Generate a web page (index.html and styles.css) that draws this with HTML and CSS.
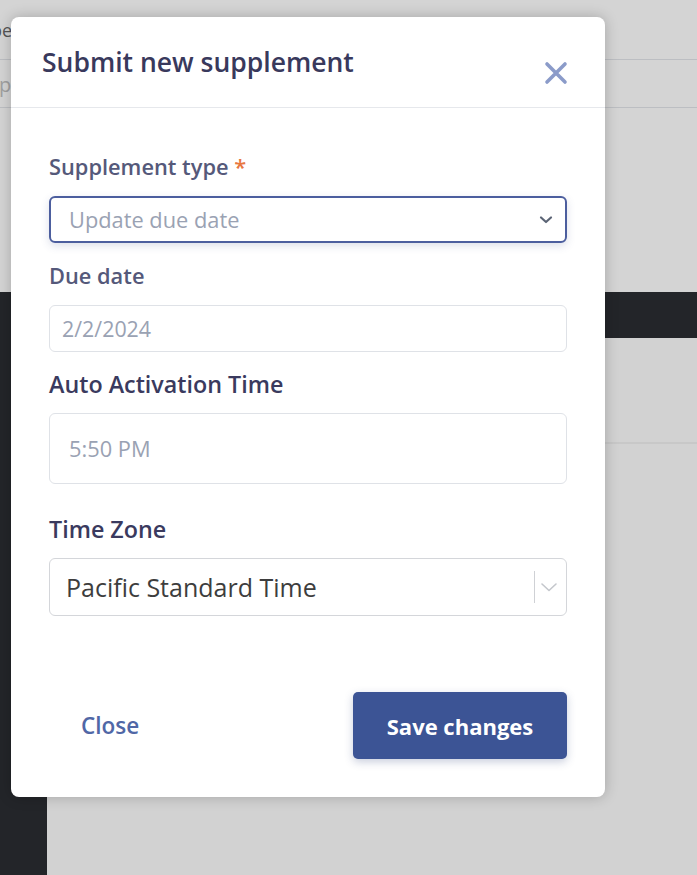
FILE: index.html
```html
<!DOCTYPE html>
<html>
<head>
<meta charset="utf-8">
<link rel="stylesheet" href="styles.css">
</head>
<body>
<div class="page">
  <div class="top">
    <div class="bg-label">Type</div>
    <div class="bg-input">Typ</div>
  </div>
  <div class="dark-bar"></div>
  <div class="lower">
    <div class="sidebar"></div>
    <div class="content">
      <div class="content-row"></div>
    </div>
  </div>
</div>

<div class="modal">
  <div class="modal-header">
    <h2 class="modal-title">Submit new supplement</h2>
    <button class="close-x" aria-label="Close">
      <svg width="24" height="24" viewBox="0 0 24 24"><path d="M3 3 L21 21 M21 3 L3 21" stroke="#8b9bc9" stroke-width="3.6" stroke-linecap="round"/></svg>
    </button>
  </div>
  <div class="modal-body">
    <div class="field">
      <label class="label label-muted">Supplement type <span class="req">*</span></label>
      <div class="select focused">
        <span class="placeholder">Update due date</span>
        <svg class="chev" width="14" height="10" viewBox="0 0 14 10"><path d="M2 2.5 L7 7 L12 2.5" fill="none" stroke="#5b6475" stroke-width="2.2" stroke-linecap="round" stroke-linejoin="round"/></svg>
      </div>
    </div>
    <div class="field">
      <label class="label label-muted">Due date</label>
      <div class="input date"><span class="placeholder">2/2/2024</span></div>
    </div>
    <div class="field">
      <label class="label label-big">Auto Activation Time</label>
      <div class="input time"><span class="placeholder">5:50 PM</span></div>
    </div>
    <div class="field">
      <label class="label label-big">Time Zone</label>
      <div class="tz">
        <span class="tz-value">Pacific Standard Time</span>
        <span class="tz-sep"></span>
        <svg class="tz-chev" width="18" height="12" viewBox="0 0 18 12"><path d="M2 3 L9 9.5 L16 3" fill="none" stroke="#c4c7cc" stroke-width="1.6" stroke-linecap="round" stroke-linejoin="round"/></svg>
      </div>
    </div>
  </div>
  <div class="modal-footer">
    <button class="btn-link">Close</button>
    <button class="btn-primary">Save changes</button>
  </div>
</div>
</body>
</html>
```

FILE: styles.css
```css
html, body {
  margin: 0;
  padding: 0;
}
* {
  box-sizing: border-box;
}
body {
  width: 697px;
  height: 875px;
  overflow: hidden;
  background: #d4d4d4;
  font-family: "Open Sans", "Noto Sans", sans-serif;
  position: relative;
}
.page {
  display: flex;
  flex-direction: column;
  height: 875px;
}
.top {
  height: 292px;
  display: flex;
  flex-direction: column;
}
.bg-label {
  margin: 20px 0 0 -28px;
  font-size: 18px;
  color: #555;
  height: 39px;
  line-height: 20px;
}
.bg-input {
  margin-left: -22px;
  height: 49px;
  border-top: 1px solid #bcbec2;
  border-bottom: 1px solid #bcbec2;
  font-size: 20px;
  color: #a0a0a0;
  line-height: 50px;
}
.dark-bar {
  height: 46px;
  background: #232529;
}
.lower {
  flex: 1;
  display: flex;
}
.sidebar {
  width: 47px;
  background: #232529;
}
.content {
  flex: 1;
  background: #d2d2d2;
}
.content-row {
  height: 106px;
  border-bottom: 2px solid #c8c8c8;
}

.modal {
  position: absolute;
  left: 11px;
  top: 17px;
  width: 594px;
  height: 780px;
  background: #fff;
  border-radius: 8px;
  box-shadow: 0 0 14px rgba(0,0,0,0.22);
  display: flex;
  flex-direction: column;
}
.modal-header {
  height: 91px;
  border-bottom: 1px solid #e6e8ec;
  display: flex;
  justify-content: space-between;
  padding: 0 37px 0 31px;
}
.modal-title {
  margin: 26px 0 0 0;
  font-size: 26.5px;
  font-weight: 600;
  color: #39395c;
  line-height: 38px;
}
.close-x {
  background: none;
  border: 0;
  padding: 0;
  margin-top: 44px;
  width: 24px;
  height: 24px;
  display: flex;
}
.modal-body {
  padding: 45px 38px 0 38px;
  display: flex;
  flex-direction: column;
}
.field {
  display: flex;
  flex-direction: column;
}
.label {
  font-size: 21.8px;
  font-weight: 600;
  color: #3a3a5e;
  line-height: 28px;
  height: 28px;
  margin-bottom: 15px;
  white-space: nowrap;
}
.label-big {
  font-size: 23.3px;
}
.label-muted {
  color: #55597a;
}
.req {
  color: #e8773f;
}
.placeholder {
  color: #9aa2b3;
  font-size: 21.8px;
}
.select {
  height: 47px;
  border: 2px solid #4c5e9e;
  border-radius: 6px;
  box-shadow: 0 3px 8px rgba(60,80,140,0.18);
  display: flex;
  align-items: center;
  justify-content: space-between;
  padding: 0 12px 0 18px;
  margin-bottom: 19px;
}
.input {
  border: 1.5px solid #dfe2e7;
  border-radius: 6px;
  display: flex;
  align-items: center;
}
.date {
  height: 47px;
  padding-left: 12px;
  margin-bottom: 18px;
}
.date .placeholder {
  font-size: 21.4px;
}
.time {
  height: 71px;
  padding-left: 19px;
  margin-bottom: 31px;
}
.tz {
  height: 58px;
  border: 1.5px solid #d4d6da;
  border-radius: 6px;
  display: flex;
  align-items: center;
  padding: 0 8px 0 16px;
}
.tz-value {
  flex: 1;
  font-size: 25px;
  color: #3d3d3d;
}
.tz-sep {
  width: 1px;
  height: 32px;
  background: #cfd1d5;
  margin-right: 5px;
}
.modal-footer {
  margin-top: auto;
  padding: 0 38px 38px 38px;
  display: flex;
  justify-content: space-between;
  align-items: center;
}
.btn-link {
  background: none;
  border: 0;
  font-family: inherit;
  font-size: 22.5px;
  font-weight: 600;
  color: #5067a6;
  padding: 0 0 0 32px;
}
.btn-primary {
  width: 214px;
  height: 67px;
  background: #3c5495;
  border: 0;
  border-radius: 5px;
  color: #fff;
  font-family: inherit;
  font-size: 22px;
  font-weight: 700;
  box-shadow: 0 3px 8px rgba(40,60,120,0.25);
}
```
